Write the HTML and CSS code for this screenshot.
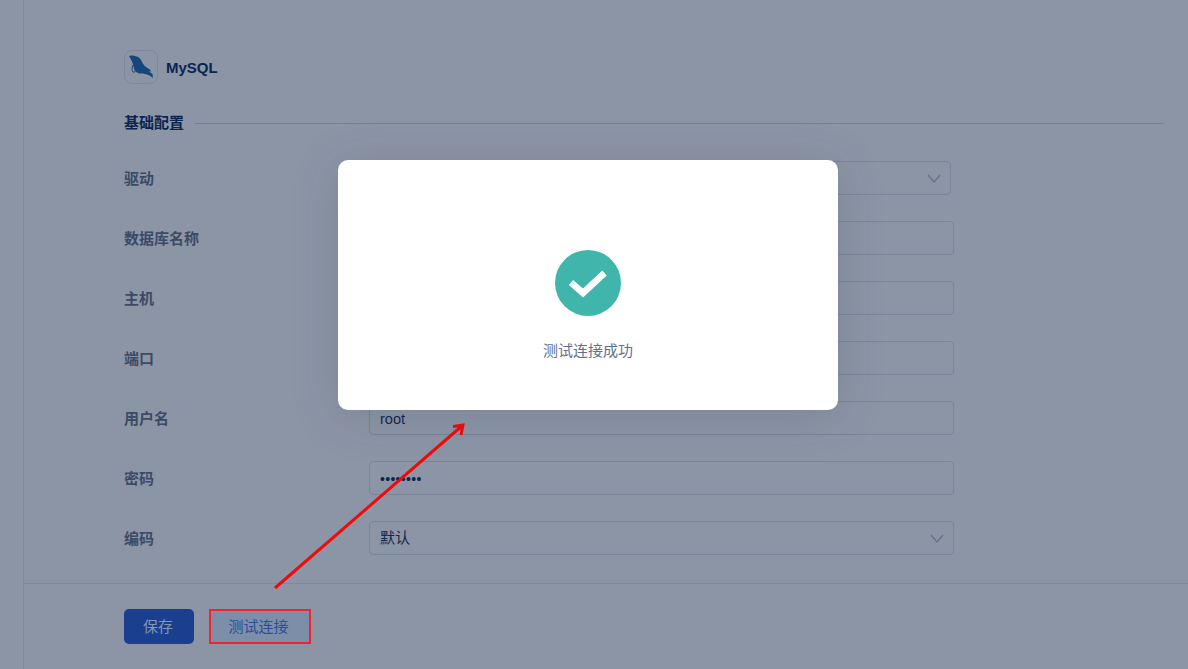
FILE: index.html
```html
<!DOCTYPE html>
<html lang="zh">
<head>
<meta charset="utf-8">
<title>MySQL</title>
<link rel="stylesheet" href="styles.css">
</head>
<body>
<div class="app">
  <aside class="rail"></aside>
  <main class="main">
    <div class="form">
      <div class="brand">
        <div class="logo">
          <svg width="32" height="32" viewBox="0 0 32 32"><path class="fish" d="M4 5C6 3.800 9 4.600 12 5.500C15 6.500 16 9 17.500 12C19 15 22 17 25 18.500L26 20.500L24 20.500L27.500 23L28 27L24.500 24.500C22 23.500 20 23 18 22.500C15 23 11 22 9.500 19C8.500 16 8 12 6.500 9.500Z"/><path class="fin" d="M8 14C7 17 6.500 19 8 21C9 21.500 10 21 10 20"/></svg>
        </div>
        <span class="brand-name">MySQL</span>
      </div>
      <div class="section"><span class="section-title">基础配置</span><span class="section-line"></span></div>
      <div class="rows">
        <div class="row"><span class="label">驱动</span><div class="field select narrow"><svg class="chev" width="14" height="9" viewBox="0 0 14 9"><path d="M1 1l6 7 6-7"/></svg></div></div>
        <div class="row"><span class="label">数据库名称</span><div class="field"></div></div>
        <div class="row"><span class="label">主机</span><div class="field"></div></div>
        <div class="row"><span class="label">端口</span><div class="field"></div></div>
        <div class="row"><span class="label">用户名</span><div class="field"><span class="value root">root</span></div></div>
        <div class="row"><span class="label">密码</span><div class="field dots"><span class="value">••••••••</span></div></div>
        <div class="row"><span class="label">编码</span><div class="field select"><span class="value">默认</span><svg class="chev" width="14" height="9" viewBox="0 0 14 9"><path d="M1 1l6 7 6-7"/></svg></div></div>
      </div>
    </div>
    <div class="footer">
      <button class="btn primary">保存</button>
      <button class="btn test">测试连接</button>
    </div>
  </main>
</div>
<svg class="arrow" width="1188" height="669" viewBox="0 0 1188 669"><path d="M275 588L463 425M453 426.500L463 425L461 435"/></svg>
<div class="modal">
  <svg class="ok" width="66" height="66" viewBox="0 0 66 66"><circle cx="33" cy="33" r="33"/><path d="M16 32.500L28 43L49.500 23"/></svg>
  <p class="msg">测试连接成功</p>
</div>
</body>
</html>
```
FILE: styles.css
```css
* { box-sizing: border-box; }
html, body { margin: 0; height: 100%; overflow: hidden; }
body {
  background: #8c95a6;
  font-family: "Liberation Sans", "Noto Sans CJK SC", sans-serif;
  font-size: 15px;
  color: #0d2a5c;
  position: relative;
}
.app { display: flex; height: 669px; }
.rail { width: 24px; flex: none; border-right: 1px solid #7e8899; }
.main { flex: 1; display: flex; flex-direction: column; min-width: 0; }
.form { flex: 1; padding: 50px 24px 0 100px; }
.brand { display: flex; align-items: center; gap: 8px; height: 34px; }
.logo {
  width: 34px; height: 34px;
  border: 1px solid #7f899b; border-radius: 8px;
  display: flex; align-items: center; justify-content: center;
}
.fish { fill: #16467f; }
.fin { fill: none; stroke: #16467f; stroke-width: 1; }
.brand-name { font-weight: 700; font-size: 15px; color: #0b2450; }
.section { display: flex; align-items: center; gap: 11px; margin-top: 28px; height: 22px; }
.section-title { font-weight: 700; color: #0b2450; line-height: 22px; }
.section-line { flex: 1; height: 1px; background: #76818f; }
.rows { margin-top: 27px; display: flex; flex-direction: column; gap: 26px; }
.row { display: flex; align-items: center; height: 34px; }
.label { width: 245px; flex: none; font-weight: 700; color: #3b4a66; line-height: 36px; height: 34px; }
.field {
  width: 585px; height: 34px;
  border: 1px solid #7a8598; border-radius: 4px;
  padding: 0 10px;
  display: flex; align-items: center; justify-content: space-between;
  color: #10274f;
}
.value { font-size: 15px; line-height: 32px; }
.root { font-size: 14.500px; padding-top: 2px; }
.narrow { width: 582px; justify-content: flex-end; }
.dots .value { letter-spacing: .3px; color: #0b2450; font-size: 14px; padding-top: 2px; }
.chev { fill: none; stroke: #667185; stroke-width: 1.200; margin-right: -1px; }
.footer {
  height: 86px; flex: none;
  border-top: 1px solid #7f899a;
  padding: 25px 0 0 100px;
  display: flex; align-items: flex-start; gap: 15px;
}
.btn {
  height: 35px; font: inherit; font-size: 15px; line-height: 32px;
  border-radius: 4px; padding: 0;
  font-family: "Liberation Sans", "Noto Sans CJK SC", sans-serif;
}
.primary { width: 70px; background: #1a3f8f; border: 0; color: #8496b5; border-radius: 5px; padding-right: 2px; }
.test { width: 102px; background: #7d8ea9; border: 2px solid #f5222d; border-radius: 0; color: #2c4d99; padding-right: 3px; }
.arrow { position: absolute; left: 0; top: 0; fill: none; stroke: #f00b0b; stroke-width: 3; }
.modal {
  position: absolute; left: 338px; top: 160px;
  width: 500px; height: 250px;
  background: #fff; border-radius: 10px;
  box-shadow: 0 6px 50px rgba(40, 50, 70, .16);
  display: flex; flex-direction: column; align-items: center;
  padding-top: 90px;
}
.ok circle { fill: #40b5ab; }
.ok path { fill: none; stroke: #fff; stroke-width: 6.500; }
.msg { margin: 25px 0 0; font-size: 15px; line-height: 20px; color: #62708a; }
```
